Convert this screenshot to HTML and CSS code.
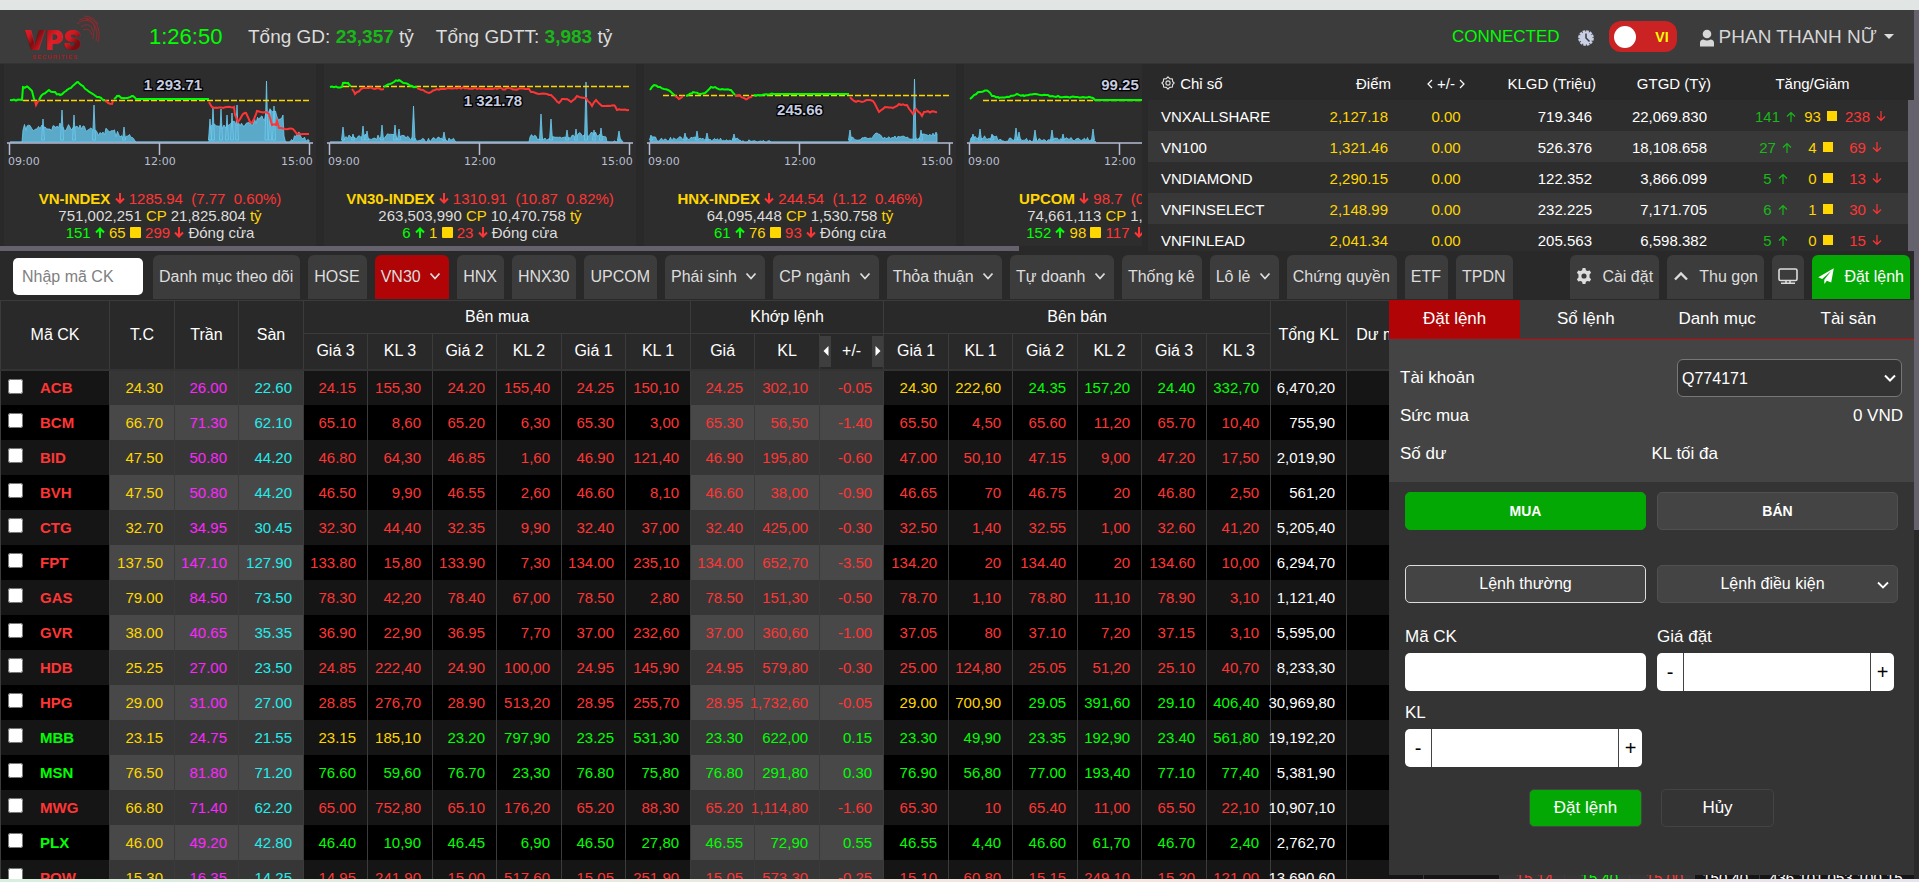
FILE: index.html
```html
<!DOCTYPE html>
<html lang="vi">
<head>
<meta charset="utf-8">
<title>VPS - Bảng giá</title>
<link rel="stylesheet" href="styles.css">
</head>
<body>
<div class="app">
  <header class="topbar">
    <svg class="logo" viewBox="0 0 82 44" role="img" aria-label="VPS Securities">
      <defs>
        <linearGradient id="logoRed" x1="0" y1="0" x2="1" y2="0.4">
          <stop offset="0" stop-color="#e8222c"/><stop offset="0.2" stop-color="#d01820"/><stop offset="0.32" stop-color="#7e0c12"/>
          <stop offset="0.45" stop-color="#b8141c"/><stop offset="0.6" stop-color="#e01e28"/>
          <stop offset="0.85" stop-color="#d01820"/><stop offset="1" stop-color="#7a0c10"/>
        </linearGradient>
      </defs>
      <text class="logo-name" x="1" y="35">VPS</text>
      <text class="logo-sub" x="9" y="44">SECURITIES</text>
      <g class="logo-swirl">
        <path d="M54 9Q62 2 70 8Q76 14 73 26"/><path d="M56 5Q66 0 73 8Q78 16 75 27"/>
        <path d="M58 12Q65 7 69 13Q72 18 70 24"/><path d="M61 1Q70 1 75 9"/>
        <path d="M60 15Q67 12 69 20"/><path d="M63 4Q72 6 72 16"/>
      </g>
    </svg>
    <time class="clock">1:26:50</time>
    <p class="total">Tổng GD: <b>23,357</b> tỷ</p>
    <p class="total">Tổng GDTT: <b>3,983</b> tỷ</p>
    <div class="session">
      <span class="connected">CONNECTED</span>
      <svg class="clock-icon" viewBox="0 0 16 16"><circle cx="8" cy="8" r="6.4"/><circle class="teeth" cx="8" cy="8" r="6.6"/><path d="M8 3.5V8L11.5 11.5"/></svg>
      <button class="lang" type="button" aria-label="Ngôn ngữ"><i></i><span>VI</span></button>
      <button class="user" type="button">
        <svg viewBox="0 0 16 18"><circle cx="8" cy="5" r="4.3"/><path d="M1 17.5V14Q1 10.5 4.5 10.5Q8 12.5 11.500 10.5Q15 10.500 15 14V17.500Z"/></svg>
        PHAN THANH NỮ<i></i>
      </button>
    </div>
  </header>

  <section class="market">
    <div class="carousel"><div class="cards" id="cards"></div><div class="hscroll"></div></div>
    <div class="indices">
      <table>
        <colgroup><col class="c-name"><col class="c-point"><col class="c-chg"><col class="c-vol"><col class="c-val"><col></colgroup>
        <thead><tr>
          <th class="left"><svg class="cog" viewBox="0 0 16 16"><path d="M8 1L10 3L13 3.500L13.300 6.300L15 8L13.300 9.700L13 12.500L10 13L8 15L6 13L3 12.500L2.700 9.700L1 8L2.700 6.300L3 3.500L6 3Z"/><circle cx="8" cy="8" r="2.400"/></svg> Chỉ số</th>
          <th>Điểm</th>
          <th class="mid"><svg class="ang" viewBox="0 0 6 10"><path d="M5 1L1 5L5 9"/></svg> +/- <svg class="ang" viewBox="0 0 6 10"><path d="M1 1L5 5L1 9"/></svg></th>
          <th>KLGD (Triệu)</th><th>GTGD (Tỷ)</th><th class="mid">Tăng/Giảm</th>
        </tr></thead>
        <tbody id="indices"></tbody>
      </table>
      <div class="vscroll"></div>
    </div>
  </section>

  <nav class="tabs">
    <input type="text" placeholder="Nhập mã CK" aria-label="Nhập mã CK">
    <button type="button">Danh mục theo dõi</button>
    <button type="button">HOSE</button>
    <button type="button" class="active">VN30 <svg class="chev" viewBox="0 0 12 8"><path d="M1.500 1.500L6 6.500L10.500 1.500"/></svg></button>
    <button type="button">HNX</button>
    <button type="button">HNX30</button>
    <button type="button">UPCOM</button>
    <button type="button">Phái sinh <svg class="chev" viewBox="0 0 12 8"><path d="M1.500 1.500L6 6.500L10.500 1.500"/></svg></button>
    <button type="button">CP ngành <svg class="chev" viewBox="0 0 12 8"><path d="M1.500 1.500L6 6.500L10.500 1.500"/></svg></button>
    <button type="button">Thỏa thuận <svg class="chev" viewBox="0 0 12 8"><path d="M1.500 1.500L6 6.500L10.500 1.500"/></svg></button>
    <button type="button">Tự doanh <svg class="chev" viewBox="0 0 12 8"><path d="M1.500 1.500L6 6.500L10.500 1.500"/></svg></button>
    <button type="button">Thống kê</button>
    <button type="button">Lô lẻ <svg class="chev" viewBox="0 0 12 8"><path d="M1.500 1.500L6 6.500L10.500 1.500"/></svg></button>
    <button type="button">Chứng quyền</button>
    <button type="button">ETF</button>
    <button type="button">TPDN</button>
    <div class="tools">
      <button type="button"><svg class="ico" viewBox="0 0 16 16"><path class="fill" fill-rule="evenodd" d="M6.600 0H9.400L9.900 2.200L11.500 3.100L13.700 2.400L15.100 4.800L13.500 6.400V9.600L15.100 11.200L13.700 13.600L11.500 12.900L9.900 13.800L9.400 16H6.600L6.100 13.800L4.500 12.900L2.300 13.600L0.900 11.200L2.500 9.600V6.400L0.900 4.800L2.300 2.400L4.500 3.100L6.100 2.200ZM8 5.400A2.600 2.600 0 1 0 8 10.600A2.600 2.600 0 1 0 8 5.400Z"/></svg> Cài đặt</button>
      <button type="button"><svg class="ico" viewBox="0 0 16 16"><path class="line" d="M2 11.500L8 5.500L14 11.500"/></svg> Thu gọn</button>
      <button type="button" aria-label="Màn hình"><svg class="ico wide" viewBox="0 0 20 16"><rect class="thin" x="1" y="1" width="18" height="11.500" rx="1.500"/><path class="thin" d="M3 15.200H17M8 13V15M12 13V15"/></svg></button>
      <button type="button" class="order"><svg class="ico" viewBox="0 0 16 16"><path class="fill" d="M15.800 0.200L0.300 9.200L4.200 10.900L13.200 3L6.300 11.700V15.900L8.900 12.800L13.200 14.600Z"/></svg> Đặt lệnh</button>
    </div>
  </nav>

  <main class="main">
    <div class="board">
      <table>
        <colgroup id="cols"></colgroup>
        <thead>
          <tr>
            <th rowspan="2">Mã CK</th><th rowspan="2">T.C</th><th rowspan="2">Trần</th><th rowspan="2">Sàn</th>
            <th colspan="6">Bên mua</th><th colspan="3">Khớp lệnh</th><th colspan="6">Bên bán</th>
            <th rowspan="2">Tổng KL</th><th rowspan="2">Dư mua</th><th rowspan="2">Dư bán</th>
            <th rowspan="2">Cao</th><th rowspan="2">TB</th><th rowspan="2">Thấp</th><th rowspan="2">NN</th><th rowspan="2"></th>
          </tr>
          <tr>
            <th>Giá 3</th><th>KL 3</th><th>Giá 2</th><th>KL 2</th><th>Giá 1</th><th>KL 1</th>
            <th>Giá</th><th>KL</th>
            <th class="switch"><div><button type="button" aria-label="Trước"><svg viewBox="0 0 5 10"><path d="M5 0V10L0 5Z"/></svg></button>+/-<button type="button" aria-label="Sau"><svg viewBox="0 0 5 10"><path d="M0 0V10L5 5Z"/></svg></button></div></th>
            <th>Giá 1</th><th>KL 1</th><th>Giá 2</th><th>KL 2</th><th>Giá 3</th><th>KL 3</th>
          </tr>
        </thead>
        <tbody id="rows"></tbody>
      </table>
    </div>

    <aside class="panel">
      <nav class="ptabs">
        <button type="button" class="active">Đặt lệnh</button><button type="button">Sổ lệnh</button>
        <button type="button">Danh mục</button><button type="button">Tài sản</button>
      </nav>
      <section class="account">
        <div class="arow"><label for="acc">Tài khoản</label>
          <span class="select"><select id="acc"><option>Q774171</option></select><svg viewBox="0 0 12 8"><path d="M1 1.500L6 6.500L11 1.500"/></svg></span></div>
        <div class="arow"><span>Sức mua</span><span>0 VND</span></div>
        <div class="arow halves"><span>Số dư</span><span>KL tối đa</span></div>
      </section>
      <form class="order-form">
        <div class="pair"><button type="button" class="buy">MUA</button><button type="button" class="sell">BÁN</button></div>
        <div class="pair types"><button type="button" class="on">Lệnh thường</button>
          <button type="button" class="cond">Lệnh điều kiện<svg viewBox="0 0 12 8"><path d="M1 1.500L6 6.500L11 1.500"/></svg></button></div>
        <div class="pair fields">
          <div><label for="code">Mã CK</label><input id="code" type="text"></div>
          <div><label for="price">Giá đặt</label><div class="stepper"><button type="button">-</button><input id="price" type="text"><button type="button">+</button></div></div>
          <div><label for="qty">KL</label><div class="stepper"><button type="button">-</button><input id="qty" type="text"><button type="button">+</button></div></div>
        </div>
        <div class="actions"><button type="button" class="submit">Đặt lệnh</button><button type="button">Hủy</button></div>
      </form>
    </aside>
  </main>
  <div class="pagescroll"></div>
</div>
<script src="script.js"></script>
</body>
</html>
```

FILE: styles.css
```css
* { box-sizing: border-box; }
body {
  margin: 0;
  height: 100vh;
  overflow: hidden;
  padding: 10px 0 3px;
  background: linear-gradient(90deg, #d8efe0 0, #f5e6e0 60%, #e6e4ec 100%) bottom / 100% 3px no-repeat, #e1e5e3;
  font: 16px "Liberation Sans", Arial, sans-serif;
  color: #fff;
}
button, input, select { font: inherit; color: inherit; }
button { border: 0; padding: 0; background: none; white-space: nowrap; }
table { border-collapse: collapse; table-layout: fixed; }
p { margin: 0; }
svg { flex: none; }

.app {
  position: relative;
  display: flex;
  flex-direction: column;
  height: 100%;
  padding-right: 5px;
  background: #292929;
}
.pagescroll { position: absolute; right: 0; top: 0; width: 5px; height: 520px; background: #65626d; }

/* header */
.topbar {
  display: flex;
  align-items: center;
  flex: none;
  height: 54px;
  padding: 0 20px 0 23px;
  background: #3c3c3c;
  border-bottom: 1px solid #333;
  font-size: 19px;
  line-height: 22px;
  color: #ddd;
}
.logo { width: 82px; height: 46px; overflow: visible; }
.logo-name { font: 900 27px Inter, "Liberation Sans", sans-serif; fill: url(#logoRed); }
.logo-sub { font: bold 6px "Liberation Sans", sans-serif; letter-spacing: 1px; fill: #a81c22; }
.logo-swirl path { fill: none; stroke: #a8232a; stroke-width: 0.8; }
.clock {
  width: 99px;
  margin-left: 44px;
  font-size: 22px;
  color: #0f0;
  white-space: nowrap;
}
.total { margin-right: 22px; white-space: nowrap; }
.total b { color: #18b818; }
.session { display: flex; align-items: center; margin-left: auto; }
.connected { color: #0f0; font-size: 17px; }
.clock-icon { width: 16px; height: 16px; margin: 3px 15px 0 18px; }
.clock-icon circle { fill: #c9cfe4; }
.clock-icon .teeth { fill: none; stroke: #c9cfe4; stroke-width: 2.5; stroke-dasharray: 2.6 0.85; }
.clock-icon path { fill: none; stroke: #3c3c3c; stroke-width: 1.5; }
.lang {
  display: flex;
  align-items: center;
  justify-content: space-between;
  width: 68px;
  height: 31px;
  margin-right: 22px;
  padding: 0 8px 0 5px;
  border-radius: 12px;
  background: #cb2223;
  color: #ff0;
  font: bold 14px "Liberation Sans", sans-serif;
}
.lang i { width: 22px; height: 22px; border-radius: 50%; background: #fff; }
.user { display: flex; align-items: center; color: #d6d6d6; }
.user svg { width: 16px; height: 18px; margin: 3px 4px 0 0; fill: #d6d6d6; }
.user i { margin-left: 7px; border: 5px solid transparent; border-top-color: #ddd; border-bottom: 0; }

/* market overview */
.market { display: flex; flex: none; height: 187px; }
.carousel { flex: 1; display: flex; flex-direction: column; min-width: 0; overflow: hidden; }
.cards { display: flex; flex: 1; min-height: 0; }
.card { flex: none; width: 320px; padding: 0 4px; text-align: center; font-size: 15px; line-height: 17px; color: #ddd; white-space: nowrap; }
.card > div { height: 100%; background: #2d2d2d; }
.card svg.chart { display: block; width: 312px; height: 126px; }
.hscroll { flex: none; width: 1019px; height: 5px; background: #65626d; }
.axis { stroke: #b4bcd4; stroke-width: 1.5; fill: none; }
.axis-label { font: 11px "DejaVu Sans", sans-serif; fill: #b9bfd0; }
.base { stroke: #ffd600; stroke-width: 1.5; stroke-dasharray: 6 2; }
.vol { fill: #5ba9c8; stroke: #6dcdf2; stroke-width: 0.8; }
.up-line, .down-line { fill: none; stroke-width: 2; }
.up-line { stroke: #0f0; }
.down-line { stroke: #ff3535; }
.ref { font: bold 15px "Liberation Sans", sans-serif; fill: #c5cce0; stroke: #000; stroke-width: 2.5; paint-order: stroke; text-anchor: middle; }
.red { color: #ff3535; }
.green { color: #0f0; }
.yellow { color: #ffd600; }
.pink { color: #ff25ff; }
.cyan { color: #25ecec; }
.arrow { width: 10px; height: 11px; fill: none; stroke: currentColor; stroke-width: 2; }
.box { display: inline-block; width: 11px; height: 11px; border-radius: 1px; background: #ffd600; }

.indices { position: relative; flex: none; width: 766px; margin-left: 6px; overflow: hidden; font-size: 15px; }
.indices table { width: 100%; }
.indices th, .indices td { height: 31px; padding: 1px 0 0; text-align: right; font-weight: normal; white-space: nowrap; }
.indices th { height: 36px; padding-top: 2px; }
.indices tbody tr { background: #2d2d2d; }
.indices tbody tr:nth-child(even) { background: #383838; }
.indices .left { padding-left: 13px; text-align: left; }
.indices .mid { text-align: center; }
.indices td.num { padding-right: 4px; }
.indices .point { padding-right: 3px; }
.c-name { width: 170px; }
.c-point { width: 73px; }
.c-chg { width: 110px; }
.c-vol { width: 95px; }
.c-val { width: 115px; }
.cog { width: 14px; height: 14px; margin-right: 1px; vertical-align: -1px; fill: none; stroke: #ddd; stroke-width: 1.3; }
.ang { width: 6px; height: 10px; fill: none; stroke: #fff; stroke-width: 1.2; }
.updown { display: grid; grid-template-columns: repeat(3, 45px); justify-content: end; margin-right: 26px; }
.updown span { display: flex; align-items: center; justify-content: center; gap: 6px; }
.updown .arrow { height: 13px; stroke-width: 1.2; }
.updown .green { color: #18b818; }
.updown .box { border-radius: 0; width: 10px; height: 10px; }
.vscroll { position: absolute; right: 0; top: 36px; bottom: 0; width: 6px; background: #65626d; }

/* market tabs */
.tabs {
  display: flex;
  align-items: stretch;
  gap: 8px;
  flex: none;
  height: 48px;
  padding: 4px 4px 0 13px;
}
.tabs > input { width: 130px; height: 37px; margin: 3px 2px 0 0; padding: 0 9px; border: 0; border-radius: 5px; background: #fff; color: #333; }
.tabs > input::placeholder { color: #808080; opacity: 1; }
.tabs button { padding: 0 7px 0 6px; border-radius: 6px 6px 0 0; background: #3c3c3c; color: #ddd; }
.tabs button.active { background: #b00406; }
.chev { width: 12px; height: 8px; margin: 0 1px 2px 4px; fill: none; stroke: currentColor; stroke-width: 1.8; }
.tools { display: flex; gap: 8px; margin-left: auto; }
.tools .ico { width: 16px; height: 16px; margin-right: 6px; vertical-align: -2px; }
.tools .ico.wide { width: 20px; margin: 0; }
.tools .fill { fill: currentColor; }
.tools .line { fill: none; stroke: currentColor; stroke-width: 2.4; }
.tools .thin { fill: none; stroke: currentColor; stroke-width: 1.6; }
.tools button { padding: 0 6px; }
.tools button.order { background: #04a804; color: #fff; }

/* price board */
.main { position: relative; flex: 1; min-height: 0; margin-top: 1px; }
.board { height: 100%; overflow: hidden; }
.board th { border: 1px solid #3b3b3b; padding: 0; font-weight: normal; height: 33px; white-space: nowrap; }
.board tr:nth-child(2) th { height: 36px; }
.board thead { border-bottom: 2px solid #333; }
.board td { height: 35px; padding: 0 11px 0 0; border-left: 1px solid #3b3b3b; text-align: right; font-size: 15px; white-space: nowrap; }
.board td.qty { direction: rtl; }
.board tbody tr { background: #151515; }
.board tbody tr:nth-child(even) { background: #000; }
.board td.hl { background: #363636; }
.board tr:nth-child(even) td.hl { background: #484848; }
.sym label { display: flex; align-items: center; gap: 17px; padding-left: 7px; font-weight: bold; }
.sym input { width: 15px; height: 15px; margin: 0 0 3px; }
.switch > div { display: flex; align-items: center; justify-content: space-between; height: 33px; }
.switch button { width: 11px; height: 31px; background: #3e3e3e; }
.switch svg { width: 6px; height: 10px; fill: #fff; }

/* order panel */
.panel {
  position: absolute;
  right: 0;
  top: 0;
  bottom: 4px;
  width: 525px;
  background: #343434;
  font-size: 17px;
}
.ptabs { display: grid; grid-template-columns: repeat(4, 1fr); height: 39px; border-bottom: 1px solid #c00408; background: #3b3b3b; }
.ptabs .active { background: #b00406; }
.account { display: flex; flex-direction: column; height: 143px; padding: 20px 11px 0; background: #444; }
.arow { display: flex; justify-content: space-between; align-items: center; height: 38px; }
.arow.halves { display: grid; grid-template-columns: 1fr 1fr; }
.select { position: relative; width: 225px; height: 38px; margin-right: 1px; }
.select select { width: 100%; height: 100%; padding: 0 4px; border: 1px solid #777; border-radius: 6px; background: #333; appearance: none; font-size: 16px; }
.select svg { position: absolute; right: 6px; top: 15px; width: 12px; height: 8px; fill: none; stroke: #fff; stroke-width: 2; pointer-events: none; }
.order-form { padding: 10px 16px 0; }
.pair { display: grid; grid-template-columns: 1fr 1fr; gap: 11px; }
.pair > button { height: 38px; border: 1px solid #505050; border-radius: 5px; background: #444; font-size: 16px; }
.pair .buy, .pair .sell { font-size: 14px; font-weight: bold; }
.pair .buy { background: #04a804; border-color: #04a804; }
.types { margin-top: 35px; }
.pair .on { border-color: #ddd; }
.pair .cond { position: relative; padding-right: 10px; }
.cond svg { position: absolute; right: 7px; top: 15px; width: 14px; height: 8px; fill: none; stroke: #fff; stroke-width: 1.8; }
.fields { margin-top: 23px; row-gap: 11px; }
.fields label { display: block; height: 27px; line-height: 22px; }
.fields input { display: block; width: 100%; height: 38px; border: 0; border-radius: 5px; background: #fff; color: #000; }
.stepper { display: flex; width: 237px; height: 38px; border-radius: 5px; background: #fff; color: #000; }
.stepper input { flex: 1; min-width: 0; border: solid #444; border-width: 0 1px; border-radius: 0; }
.stepper button { width: 26px; font-size: 20px; }
.stepper button:last-child { width: 23px; }
.actions { display: flex; justify-content: center; gap: 19px; margin-top: 22px; }
.actions button { width: 113px; height: 38px; border: 1px solid #444; border-radius: 5px; }
.actions .submit { background: #04a804; }
```

FILE: script.js
```js
const arrow = (up, w) => `<svg class="arrow" viewBox="0 0 10 ${w || 11}"><path d="${up ? 'M5 11V1.500M1 5.500L5 1.500L9 5.500' : 'M5 0V9.500M1 5.500L5 9.500L9 5.500'}"/></svg>`;

/* Index cards: lines are colour-tagged point lists, volume is an outline plus spikes. */
const charts = [
  { name: 'VN-INDEX', last: '1285.94', diff: '7.77', pct: '0.60%', vol: '751,002,251', val: '21,825.804', up: 151, same: 65, down: 299,
    ref: ['1 293.71', 173, 26], base: 36.5, noise: 8,
    lines: ['g10,36 22,36 23,23 28,23 32,27 34,35 35,36', 'r35,37 36,41 37,39 39,36', 'g39,36 43,30 49,26 53,28 60,31 67,26 71,24 75,20 78,18 81,21 87,26 93,30 97,33 105,36', 'r105,37 108,39 112,40 113,37', 'g114,35 117,32 124,34 133,32 136,35 209,35', 'r209,38 212,43 217,44 227,43 234,43 235,51 238,58 243,50 246,49 250,58 252,59 257,47 265,48 269,50 272,61 276,61 277,57 279,64 293,65 297,70 309,70'],
    area: '22,78 23,66 27,62 32,65 37,65 42,61 50,65 57,62 67,64 74,62 80,61 88,66 97,68 103,68 113,67 120,73 128,72 135,77 136,78 209,78 210,63 213,61 218,62 227,61 234,57 243,62 250,59 263,55 267,48 274,47 277,53 283,51 284,72 287,78 293,77 300,71 303,75 309,76',
    spikes: '43,55 62,46 74,51 94,41 124,63 210,55 213,43 221,45 227,51 232,49 237,41 266.5,17 270,46 274,42' },
  { name: 'VN30-INDEX', last: '1310.91', diff: '10.87', pct: '0.82%', vol: '263,503,990', val: '10,470.758', up: 6, same: 1, down: 23,
    ref: ['1 321.78', 173, 42], base: 22.5, noise: 5,
    lines: ['g10,23 22,23 23,19 28,19 31,22', 'r32,25 35,30 41,25 49,24 64,25', 'g64,23 70,20 74,18 79,16 84,19 92,22 97,23', 'r97,24 103,26 109,29 115,26 123,25 135,24 209,25 211,28 219,30 231,31 235,35 239,39 242,35 247,35 251,38 257,32 266,34 272,42 276,36 282,42 295,42 297,46 309,46'],
    area: '22,78 23,73 35,74 44,72 55,74 66,72 80,73 95,74 98,77 120,75 135,77 136,78 209,78 210,73 225,74 240,73 265,70 280,70 286,73 287,78 297,78 299,74 303,78',
    spikes: '23,63 33,70 43,62 47,67 62,61 75,61 79,65 93.5,42 124,68 221,50 231,55 247,66 256,65 266,18 274,66 281,64 299,67' },
  { name: 'HNX-INDEX', last: '244.54', diff: '1.12', pct: '0.46%', vol: '64,095,448', val: '1,530.758', up: 61, same: 76, down: 93,
    ref: ['245.66', 160, 51], base: 31.5, noise: 4,
    lines: ['g10,26 14,21 20,23 28,26 35,31', 'r35,32 39,35 43,32', 'g46,32 53,28 59,30 65,29 71,23 82,25 91,26 95,31', 'r95,32 100,32 107,35 112,32', 'g114,31 122,31 135,30 209,30', 'r210,33 214,37 222,38 227,36 233,37 239,48 245,43 253,44 259,40 267,41 273,50 276,45 282,52 284,48 297,48'],
    area: '10,78 11,74 20,76 35,75 45,74 60,74 70,75 90,76 100,76 110,77 135,78 209,78 210,72 216,76 230,74 237,69 243,75 260,73 272,75 279,74 284,70 297,70 297,78',
    spikes: '11,71 45,69 57,67 67,69 94,70 210,66 274.500,15 281,66' },
  { name: 'UPCOM', last: '98.7', diff: '0.55', pct: '0.55%', vol: '74,661,113', val: '1,066.804', up: 152, same: 98, down: 117,
    ref: ['99.25', 160, 26], base: 36.5, noise: 4,
    lines: ['g10,35 14,31 19,28 28,27 32,32 39,34 49,33 57,30 64,32 74,30 86,31 92,32 111,33 123,33 133,34 135,36 209,36'],
    area: '10,78 11,74 20,74 35,73 42,77 56,75 70,76 90,76 105,75 120,76 133,75 136,78',
    spikes: '13,70 20,65 32,70 56,64 59,68 75,66 92,66 103,70 133,65' }
];

let seed = 7;
const rnd = () => (seed = (seed * 16807) % 2147483647) / 2147483647;
const parse = s => s.split(' ').map(p => p.split(',').map(Number));

/* Adds fine jitter between key points; amp is the jitter height in px. */
function roughen(points, amp, step) {
  const out = [];
  points.forEach((p, i) => {
    out.push(p);
    const q = points[i + 1];
    if (!q) return;
    const flat = Math.abs(p[1] - q[1]) < 0.5 && q[0] - p[0] > 20;
    for (let x = p[0] + step; !flat && x < q[0] - 0.5; x += step) {
      const y = p[1] + (q[1] - p[1]) * (x - p[0]) / (q[0] - p[0]);
      out.push([x, y + (rnd() - 0.5) * amp]);
    }
  });
  return out;
}
const d = pts => 'M' + pts.map(p => p[0].toFixed(1) + ' ' + Math.min(78, p[1]).toFixed(1)).join('L');

document.getElementById('cards').innerHTML = charts.map(c => {
  const area = roughen(parse(c.area), c.noise, 1.5);
  const spikes = parse(c.spikes).map(([x, y]) => `M${x - 1.5} 76L${x} ${y}L${x + 1.5} 76Z`).join('');
  const first = area[0][0], end = area[area.length - 1][0];
  return `<article class="card"><div>
  <svg class="chart" viewBox="4 0 312 126">
    <path class="vol" d="${d([[10, 78], [first, 78], ...area, [end, 78]])}Z"/><path class="vol" d="${spikes}"/>
    <path class="base" d="M23 ${c.base}H310"/>
    ${c.lines.map(l => `<path class="${l[0] === 'g' ? 'up' : 'down'}-line" d="${d(roughen(parse(l.slice(1)), 1.6, 2))}"/>`).join('')}
    <path class="axis" d="M7 79H313M9.500 79V91M159.500 79V91M309.500 79V91"/>
    <text class="axis-label" x="8" y="101">09:00</text><text class="axis-label" x="144" y="101">12:00</text><text class="axis-label" x="281" y="101">15:00</text>
    <text class="ref" x="${c.ref[1]}" y="${c.ref[2]}">${c.ref[0]}</text>
  </svg>
  <span class="red"><b class="yellow">${c.name}</b> ${arrow(0)} ${c.last} &nbsp;(${c.diff} &nbsp;${c.pct})</span><br>
  ${c.vol} <span class="yellow">CP</span> ${c.val} <span class="yellow">tỷ</span><br>
  <span class="green">${c.up} ${arrow(1)}</span> <span class="yellow">${c.same} <i class="box"></i></span> <span class="red">${c.down} ${arrow(0)}</span> Đóng cửa
  </div></article>`;
}).join('');

document.getElementById('indices').innerHTML = [
  ['VNXALLSHARE', '2,127.18', '719.346', '22,069.830', 141, 93, 238],
  ['VN100', '1,321.46', '526.376', '18,108.658', 27, 4, 69],
  ['VNDIAMOND', '2,290.15', '122.352', '3,866.099', 5, 0, 13],
  ['VNFINSELECT', '2,148.99', '232.225', '7,171.705', 6, 1, 30],
  ['VNFINLEAD', '2,041.34', '205.563', '6,598.382', 5, 0, 15]
].map(r => `<tr><td class="left">${r[0]}</td><td class="yellow point">${r[1]}</td><td class="yellow mid">0.00</td><td class="num">${r[2]}</td><td class="num">${r[3]}</td>
<td><div class="updown"><span class="green">${r[4]}${arrow(1)}</span><span class="yellow">${r[5]}<i class="box"></i></span><span class="red">${r[6]}${arrow(0)}</span></div></td></tr>`).join('');

/* Board columns: code, reference, ceiling, floor, 3 bids, match, 3 asks, totals. */
const widths = [109];
for (let i = 0; i < 9; i++) widths.push(65, 64);
widths.push(76, 77, 76, 65, 65, 65, 65, 154);
document.getElementById('cols').innerHTML = widths.map(w => `<col style="width:${w}px">`).join('');
document.querySelector('.board table').style.width = widths.reduce((a, b) => a + b) + 'px';

document.getElementById('rows').innerHTML = `
ACB 24.30 26.00 22.60 24.15 155,30 24.20 155,40 24.25 150,10 24.25 302,10 -0.05 24.30 222,60 24.35 157,20 24.40 332,70 6,470,20
BCM 66.70 71.30 62.10 65.10 8,60 65.20 6,30 65.30 3,00 65.30 56,50 -1.40 65.50 4,50 65.60 11,20 65.70 10,40 755,90
BID 47.50 50.80 44.20 46.80 64,30 46.85 1,60 46.90 121,40 46.90 195,80 -0.60 47.00 50,10 47.15 9,00 47.20 17,50 2,019,90
BVH 47.50 50.80 44.20 46.50 9,90 46.55 2,60 46.60 8,10 46.60 38,00 -0.90 46.65 70 46.75 20 46.80 2,50 561,20
CTG 32.70 34.95 30.45 32.30 44,40 32.35 9,90 32.40 37,00 32.40 425,00 -0.30 32.50 1,40 32.55 1,00 32.60 41,20 5,205,40
FPT 137.50 147.10 127.90 133.80 15,80 133.90 7,30 134.00 235,10 134.00 652,70 -3.50 134.20 20 134.40 20 134.60 10,00 6,294,70
GAS 79.00 84.50 73.50 78.30 42,20 78.40 67,00 78.50 2,80 78.50 151,30 -0.50 78.70 1,10 78.80 11,10 78.90 3,10 1,121,40
GVR 38.00 40.65 35.35 36.90 22,90 36.95 7,70 37.00 232,60 37.00 360,60 -1.00 37.05 80 37.10 7,20 37.15 3,10 5,595,00
HDB 25.25 27.00 23.50 24.85 222,40 24.90 100,00 24.95 145,90 24.95 579,80 -0.30 25.00 124,80 25.05 51,20 25.10 40,70 8,233,30
HPG 29.00 31.00 27.00 28.85 276,70 28.90 513,20 28.95 255,70 28.95 1,732,60 -0.05 29.00 700,90 29.05 391,60 29.10 406,40 30,969,80
MBB 23.15 24.75 21.55 23.15 185,10 23.20 797,90 23.25 531,30 23.30 622,00 0.15 23.30 49,90 23.35 192,90 23.40 561,80 19,192,20
MSN 76.50 81.80 71.20 76.60 59,60 76.70 23,30 76.80 75,80 76.80 291,80 0.30 76.90 56,80 77.00 193,40 77.10 77,40 5,381,90
MWG 66.80 71.40 62.20 65.00 752,80 65.10 176,20 65.20 88,30 65.20 1,114,80 -1.60 65.30 10 65.40 11,00 65.50 22,10 10,907,10
PLX 46.00 49.20 42.80 46.40 10,90 46.45 6,90 46.50 27,80 46.55 72,90 0.55 46.55 4,40 46.60 61,70 46.70 2,40 2,762,70
POW 15.30 16.35 14.25 14.95 241,90 15.00 517,60 15.05 251,90 15.05 573,30 -0.25 15.10 60,80 15.15 249,10 15.20 121,00 13,690,60 - - 15.14 15.40 15.00 150,40 436,101,053,100,15
`.trim().split('\n').map(line => {
  const v = line.split(' ');
  const ref = +v[1];
  const tone = p => +p > ref ? 'green' : +p < ref ? 'red' : 'yellow';
  const price = (p, c = '') => `<td class="${tone(p)} ${c}">${p}</td>`;
  const qty = (p, q, c = '') => `<td class="qty ${tone(p)} ${c}">${q}</td>`;
  let html = `<td class="sym ${tone(v[10])}"><label><input type="checkbox">${v[0]}</label></td>
    <td class="hl yellow">${v[1]}</td><td class="hl pink">${v[2]}</td><td class="hl cyan">${v[3]}</td>`;
  for (let i = 4; i < 10; i += 2) html += price(v[i], '') + qty(v[i], v[i + 1]);
  html += price(v[10], 'hl') + qty(v[10], v[11], 'hl') + `<td class="hl ${tone(v[10])}">${v[12]}</td>`;
  for (let i = 13; i < 19; i += 2) html += price(v[i], '') + qty(v[i], v[i + 1]);
  html += `<td class="qty">${v[19]}</td><td></td><td></td>`;
  for (let i = 22; i < 25; i++) html += v[i] ? price(v[i], 'hl') : '<td class="hl"></td>';
  html += `<td>${v[25] || ''}</td><td>${v[26] || ''}</td>`;
  return `<tr>${html}</tr>`;
}).join('');
```
